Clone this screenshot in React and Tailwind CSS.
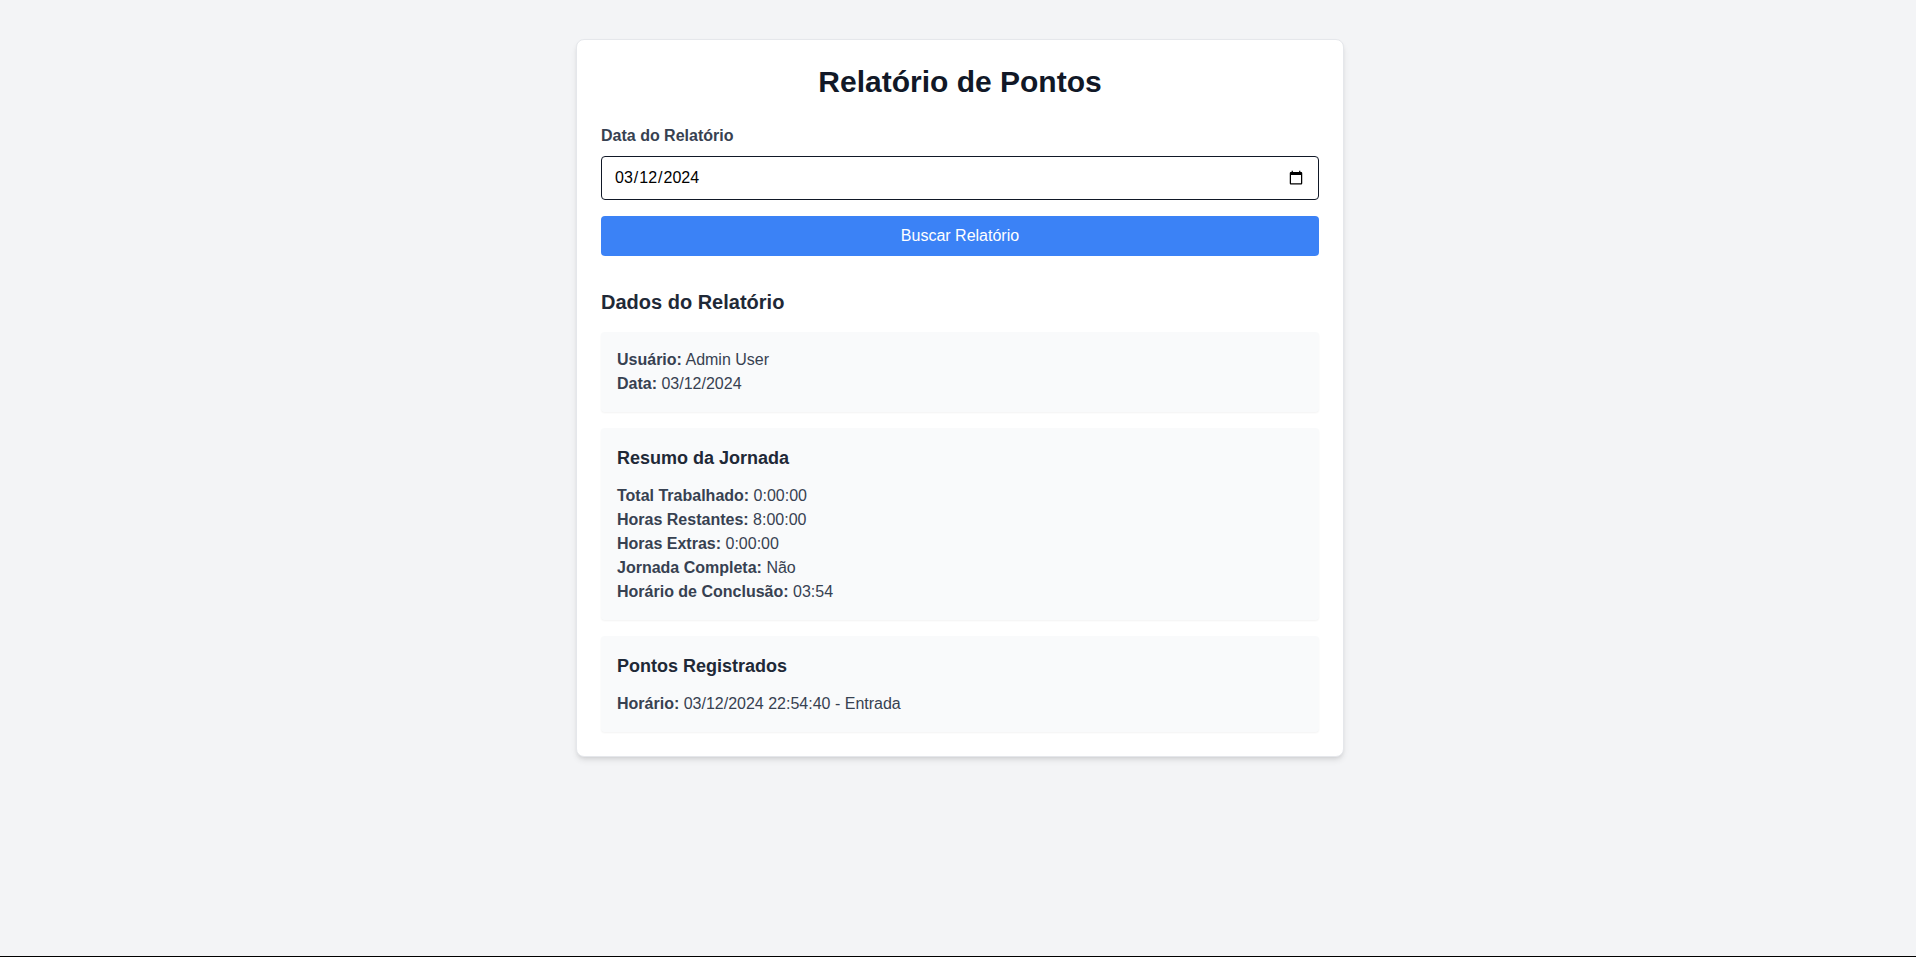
import { useState } from "react";

const user = [
  ["Usuário", "Admin User"],
  ["Data", "03/12/2024"],
];

const summary = [
  ["Total Trabalhado", "0:00:00"],
  ["Horas Restantes", "8:00:00"],
  ["Horas Extras", "0:00:00"],
  ["Jornada Completa", "Não"],
  ["Horário de Conclusão", "03:54"],
];

const points = [["Horário", "03/12/2024 22:54:40 - Entrada"]];

function Panel({ title, rows }) {
  return (
    <section className="rounded bg-[#f9fafb] p-4 shadow-[0_1px_2px_0_rgba(0,0,0,0.05)]">
      {title && (
        <h3 className="mb-3 text-lg leading-7 font-semibold text-[#1f2937]">{title}</h3>
      )}
      {rows.map(([label, value]) => (
        <p key={label}>
          <strong className="font-bold">{label}:</strong> {value}
        </p>
      ))}
    </section>
  );
}

export default function App() {
  const [date, setDate] = useState("2024-03-12");

  return (
    <div className="min-h-screen border-b border-black bg-[#f3f4f6] pt-[39px] pl-1 font-['Liberation_Sans',Arial,sans-serif] text-base text-[#374151]">
      <main className="mx-auto max-w-3xl rounded-lg border border-[#e5e7eb] bg-white p-6 shadow-[0_4px_6px_-1px_rgba(0,0,0,0.1),0_2px_4px_-2px_rgba(0,0,0,0.1)]">
        <h1 className="mb-6 text-center text-3xl leading-9 font-bold text-[#111827]">
          Relatório de Pontos
        </h1>

        <form onSubmit={(e) => e.preventDefault()}>
          <label htmlFor="report-date" className="mb-2 block font-semibold">
            Data do Relatório
          </label>
          <input
            id="report-date"
            type="date"
            value={date}
            onChange={(e) => setDate(e.target.value)}
            className="mb-4 block h-11 w-full rounded border border-[#111827] bg-white px-3 text-black"
          />
          <button type="submit" className="block w-full rounded bg-[#3b82f6] px-4 py-2 text-white">
            Buscar Relatório
          </button>
        </form>

        <h2 className="mt-8 mb-4 text-xl leading-7 font-semibold text-[#1f2937]">
          Dados do Relatório
        </h2>
        <div className="flex flex-col gap-4">
          <Panel rows={user} />
          <Panel title="Resumo da Jornada" rows={summary} />
          <Panel title="Pontos Registrados" rows={points} />
        </div>
      </main>
    </div>
  );
}
